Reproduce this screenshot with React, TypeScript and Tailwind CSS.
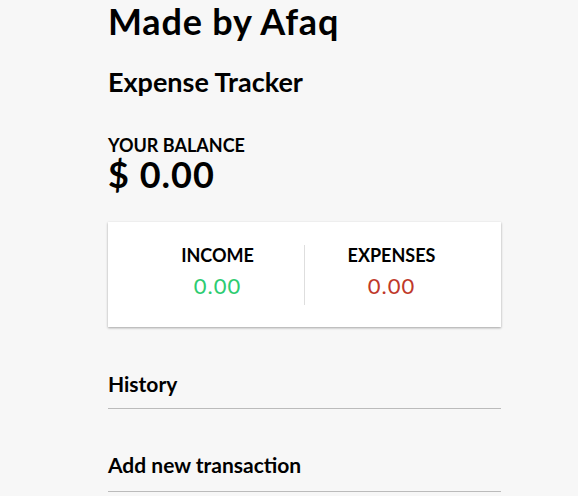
export default function App() {
  return (
    <div className="min-h-[496px] bg-[#f7f7f7] font-['Lato',sans-serif] text-black">
      <div className="ml-[108px] w-[393px]">
        <h1 className="text-[36px] font-bold leading-[1.2] tracking-[0.8px]">Made by Afaq</h1>
        <h2 className="mt-[23px] text-[27px] font-bold leading-[1.2]">Expense Tracker</h2>

        <h4 className="mt-[36px] text-[18px] font-bold uppercase leading-[1.2]">Your Balance</h4>
        <h1 className="text-[36px] font-bold leading-[36px] tracking-[1px]">$ 0.00</h1>

        <div className="mt-[30px] flex bg-white px-[23px] pt-[23px] pb-[22px] shadow-[0_1px_3px_rgba(0,0,0,0.12),0_1px_2px_rgba(0,0,0,0.24)]">
          <div className="flex-1 border-r border-[#dedede] text-center">
            <h4 className="text-[18px] font-bold uppercase leading-[1.2]">Income</h4>
            <p className="my-[6px] text-[22px] leading-[1.2] tracking-[1px] text-[#2ecc71]">0.00</p>
          </div>
          <div className="flex-1 text-center">
            <h4 className="text-[18px] font-bold uppercase leading-[1.2]">Expenses</h4>
            <p className="my-[6px] text-[22px] leading-[1.2] tracking-[1px] text-[#c0392b]">0.00</p>
          </div>
        </div>

        <h3 className="mt-[44px] border-b border-[#bbb] pb-[12px] text-[21px] font-bold leading-[1.2]">History</h3>
        <h3 className="mt-[43px] border-b border-[#bbb] pb-[13px] text-[21px] font-bold leading-[1.2]">Add new transaction</h3>
      </div>
    </div>
  );
}
